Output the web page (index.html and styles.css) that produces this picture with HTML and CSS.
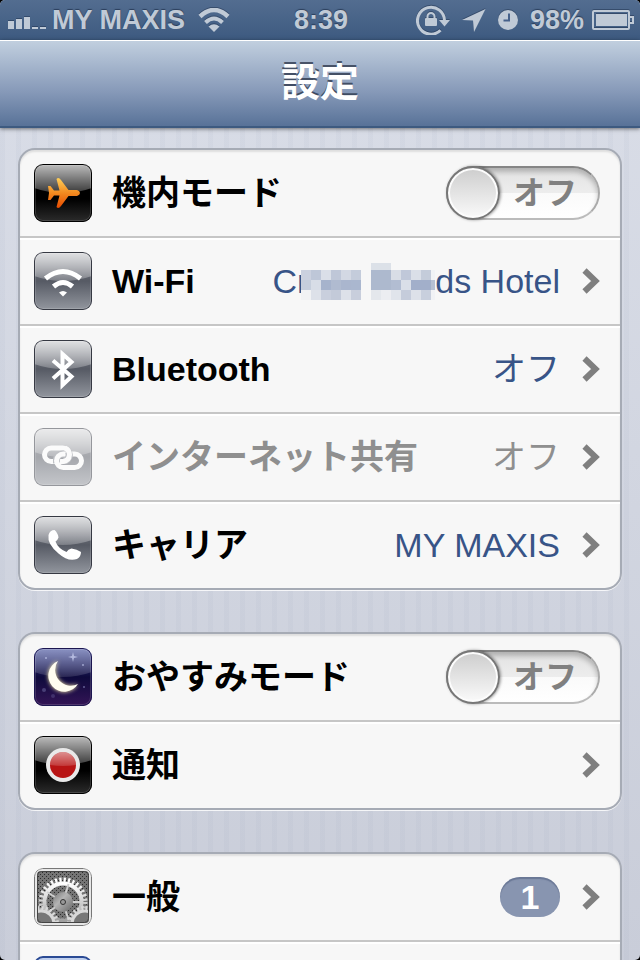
FILE: index.html
```html
<!DOCTYPE html>
<html lang="ja">
<head>
    <meta charset="UTF-8">
    <meta name="viewport" content="width=device-width, initial-scale=1.0">
    <title>設定</title>
    <link rel="stylesheet" href="styles.css">
</head>
<body>
    <!-- shared gradients and symbols -->
    <svg class="defs" width="0" height="0" aria-hidden="true">
        <defs>
            <linearGradient id="gloss-fill" x1="0" y1="0" x2="0" y2="1">
                <stop offset="0" stop-color="#fff" stop-opacity=".75"/>
                <stop offset="1" stop-color="#fff" stop-opacity=".22"/>
            </linearGradient>
            <linearGradient id="orange" x1="0" y1="0" x2="0" y2="1">
                <stop offset="0" stop-color="#ffd05a"/>
                <stop offset=".5" stop-color="#f28a20"/>
                <stop offset="1" stop-color="#e64a00"/>
            </linearGradient>
            <linearGradient id="metal" x1="0" y1="0" x2="0" y2="1">
                <stop offset="0" stop-color="#fff"/>
                <stop offset="1" stop-color="#a0a0a0"/>
            </linearGradient>
            <linearGradient id="hub" x1="0" y1="0" x2="1" y2="1">
                <stop offset="0" stop-color="#777"/>
                <stop offset=".4" stop-color="#b4b4b4"/>
                <stop offset="1" stop-color="#666"/>
            </linearGradient>
            <pattern id="mesh" width="4" height="4" patternUnits="userSpaceOnUse">
                <rect width="4" height="4" fill="#747474"/>
                <rect width="1" height="1" fill="#2c2c2c"/>
                <rect x="2" y="2" width="1" height="1" fill="#2c2c2c"/>
            </pattern>
        </defs>
        <symbol id="gloss" viewBox="0 0 58 58">
            <path d="M0 0H58V24Q29 34 0 24Z" fill="url(#gloss-fill)"/>
        </symbol>
        <symbol id="chevron" viewBox="0 0 18 26">
            <path d="M2.5 2.5L13.5 13L2.5 23.5" fill="none" stroke="#7f7f7f" stroke-width="6"/>
        </symbol>
    </svg>

    <div class="screen">
        <header class="status-bar">
            <div class="status-left">
                <svg class="signal" width="38" height="13" viewBox="0 0 38 13" fill="currentColor">
                    <rect y="5" width="6" height="8"/>
                    <rect x="8" y="3" width="6" height="10"/>
                    <rect x="16" y="1" width="6" height="12"/>
                    <rect x="24" y="11" width="6" height="2"/>
                    <rect x="32" y="11" width="6" height="2"/>
                </svg>
                <span>MY MAXIS</span>
                <svg class="status-wifi" width="32" height="24" viewBox="0 0 32 24">
                    <path d="M2 8.5Q16-4.5 30 8.5" fill="none" stroke="currentColor" stroke-width="4.5"/>
                    <path d="M7.5 14.5Q16 6.5 24.5 14.5" fill="none" stroke="currentColor" stroke-width="4"/>
                    <path d="M10.500 18.5Q16 14 21.500 18.5L16 24Z" fill="currentColor"/>
                </svg>
            </div>
            <time class="clock">8:39</time>
            <div class="status-right">
                <svg width="34" height="30" viewBox="0 0 34 30">
                    <path d="M24.5 25.300A13.500 13.500 0 1 1 28.500 16" fill="none" stroke="currentColor" stroke-width="3"/>
                    <path d="M23 15H34L28.500 21.500Z" fill="currentColor"/>
                    <rect x="9" y="13" width="12" height="8" rx="1" fill="currentColor"/>
                    <path d="M11.500 13V11.500a3.500 3.500 0 0 1 7 0V13" fill="none" stroke="currentColor" stroke-width="2"/>
                </svg>
                <svg width="24" height="24" viewBox="0 0 24 24">
                    <path d="M23.500 1L12 24L11 12.500L0 12Z" fill="currentColor"/>
                </svg>
                <svg width="20" height="20" viewBox="0 0 20 20">
                    <circle cx="10" cy="10" r="10" fill="currentColor"/>
                    <path d="M11 3.500V10.500H5.500" fill="none" stroke="#46618a" stroke-width="2"/>
                </svg>
                <span>98%</span>
                <svg width="42" height="20" viewBox="0 0 42 20">
                    <rect x="1" y="1" width="36" height="18" rx="1" fill="none" stroke="currentColor" stroke-width="2"/>
                    <rect x="4" y="4" width="31" height="12" fill="currentColor"/>
                    <path d="M38 7H41V13H38" fill="none" stroke="currentColor" stroke-width="2"/>
                </svg>
            </div>
        </header>

        <div class="nav-bar">
            <h1>設定</h1>
        </div>

        <main class="content">
            <ul class="card">
                <li class="row">
                    <span class="icon icon-black">
                        <svg viewBox="0 0 58 58">
                            <use href="#gloss"/>
                            <path d="M14 22H16.500L20 26.500H25.500L22.500 15Q24.500 12.500 27 16L34.500 26H43Q46 27 46 29Q46 31 43 32H34.500L27 42Q24.500 45.500 22.500 43L25.500 31.500H20L16.500 36H14L15 29Z" fill="url(#orange)"/>
                        </svg>
                    </span>
                    <label class="name" for="airplane">機内モード</label>
                    <span class="switch">
                        <input type="checkbox" id="airplane">
                        <span class="switch-text">オフ</span>
                    </span>
                </li>
                <li>
                    <a class="row" href="#">
                        <span class="icon icon-gray">
                            <svg viewBox="0 0 58 58">
                                <use href="#gloss"/>
                                <g fill="none" stroke="#fff" stroke-width="5">
                                    <path d="M11.500 26.500Q29 12.500 46.500 26.500"/>
                                    <path d="M19.500 34.500Q29 26.500 38.500 34.500"/>
                                </g>
                                <path d="M25 40.500Q29 37.500 33 40.500L29 44.500Z" fill="#fff"/>
                            </svg>
                        </span>
                        <span class="name">Wi-Fi</span>
                        <span class="value network">Cr<svg class="mosaic" width="134" height="37" viewBox="0 0 134 37" shape-rendering="crispEdges">
                                <rect width="60" height="37" fill="#f7f7f7"/>
                                <rect x="0" y="7" width="10" height="10" fill="#cbd1df"/>
                                <rect x="10" y="7" width="10" height="10" fill="#bec7d8"/>
                                <rect x="20" y="7" width="10" height="10" fill="#dadfe8"/>
                                <rect x="30" y="7" width="10" height="10" fill="#bfc7d8"/>
                                <rect x="40" y="7" width="10" height="10" fill="#d3d8e3"/>
                                <rect x="50" y="7" width="10" height="10" fill="#c4ccdb"/>
                                <rect x="0" y="17" width="10" height="10" fill="#c6cedc"/>
                                <rect x="10" y="17" width="10" height="10" fill="#d8dde7"/>
                                <rect x="20" y="17" width="10" height="10" fill="#a6b3cc"/>
                                <rect x="30" y="17" width="10" height="10" fill="#b0bbd0"/>
                                <rect x="40" y="17" width="10" height="10" fill="#aab6ce"/>
                                <rect x="50" y="17" width="10" height="10" fill="#aab7cf"/>
                                <rect x="0" y="27" width="10" height="10" fill="#f1f2f4"/>
                                <rect x="10" y="27" width="10" height="10" fill="#dde1e9"/>
                                <rect x="20" y="27" width="10" height="10" fill="#c9cfdd"/>
                                <rect x="30" y="27" width="10" height="10" fill="#c3cad9"/>
                                <rect x="40" y="27" width="10" height="10" fill="#dde1e9"/>
                                <rect x="50" y="27" width="10" height="10" fill="#c8cedc"/>
                                <rect x="70" y="0" width="20" height="7" fill="#dce1e8"/>
                                <rect x="70" y="7" width="20" height="20" fill="#adb9ce"/>
                                <rect x="90" y="7" width="10" height="10" fill="#d8dde6"/>
                                <rect x="100" y="7" width="10" height="10" fill="#c0c8d9"/>
                                <rect x="110" y="7" width="10" height="10" fill="#dadfe8"/>
                                <rect x="120" y="7" width="10" height="10" fill="#c4ccda"/>
                                <rect x="130" y="7" width="4" height="10" fill="#f1f3f5"/>
                                <rect x="90" y="17" width="10" height="10" fill="#b2bdd2"/>
                                <rect x="100" y="17" width="10" height="10" fill="#dadfe8"/>
                                <rect x="110" y="17" width="20" height="10" fill="#a2afca"/>
                                <rect x="130" y="17" width="4" height="10" fill="#b6c0d3"/>
                                <rect x="70" y="27" width="10" height="10" fill="#e4e7ec"/>
                                <rect x="80" y="27" width="10" height="10" fill="#ecedf1"/>
                                <rect x="90" y="27" width="10" height="10" fill="#e0e4eb"/>
                                <rect x="100" y="27" width="10" height="10" fill="#c5ccdb"/>
                                <rect x="110" y="27" width="10" height="10" fill="#dde1e9"/>
                                <rect x="120" y="27" width="10" height="10" fill="#c8cfdd"/>
                                <rect x="130" y="27" width="4" height="10" fill="#f1f2f5"/>
                            </svg>ds Hotel</span>
                        <svg class="chevron"><use href="#chevron"/></svg>
                    </a>
                </li>
                <li>
                    <a class="row" href="#">
                        <span class="icon icon-gray">
                            <svg viewBox="0 0 58 58">
                                <use href="#gloss"/>
                                <path d="M19 20.500L37.500 36.500L28.500 45V14L37.500 22L19 38.500" fill="none" stroke="#fff" stroke-width="4"/>
                            </svg>
                        </span>
                        <span class="name">Bluetooth</span>
                        <span class="value">オフ</span>
                        <svg class="chevron"><use href="#chevron"/></svg>
                    </a>
                </li>
                <li>
                    <a class="row disabled" href="#">
                        <span class="icon icon-gray">
                            <svg viewBox="0 0 58 58">
                                <use href="#gloss"/>
                                <g fill="none" stroke="#fff" stroke-width="5">
                                    <rect x="10.500" y="20" width="25" height="13.500" rx="6.750"/>
                                    <path d="M22.500 35Q21.500 26 29.500 26H34" stroke="#888c95" stroke-width="7"/>
                                    <rect x="22.500" y="26" width="25" height="13.500" rx="6.750"/>
                                    <path d="M34.500 23.500Q37 30 31 33" stroke="#888c95" stroke-width="7"/>
                                    <path d="M31 20Q35.500 22 35.500 26.750Q35 33 28.750 33.500H27"/>
                                </g>
                            </svg>
                        </span>
                        <span class="name">インターネット共有</span>
                        <span class="value">オフ</span>
                        <svg class="chevron"><use href="#chevron"/></svg>
                    </a>
                </li>
                <li>
                    <a class="row" href="#">
                        <span class="icon icon-gray">
                            <svg viewBox="0 0 58 58">
                                <use href="#gloss"/>
                                <path d="M14.500 19Q16 14 20.500 14Q24 17 24.500 21.500Q23.500 24.500 21.500 25.500Q24 32.500 32.500 36Q34 33 37.500 32.500Q43 33 47 36Q47 41 43 43Q34 46 24.500 37.500Q13 28 14.500 19Z" fill="#fff"/>
                            </svg>
                        </span>
                        <span class="name">キャリア</span>
                        <span class="value">MY MAXIS</span>
                        <svg class="chevron"><use href="#chevron"/></svg>
                    </a>
                </li>
            </ul>

            <ul class="card">
                <li class="row">
                    <span class="icon icon-night">
                        <svg viewBox="0 0 58 58">
                            <g fill="#a9b1e4">
                                <circle cx="12" cy="10" r="1" opacity=".7"/>
                                <circle cx="49" cy="17" r="1" opacity=".7"/>
                                <circle cx="50" cy="39" r="1" opacity=".5"/>
                                <circle cx="10" cy="42" r="2" opacity=".3"/>
                                <circle cx="19" cy="48" r="2" opacity=".2"/>
                                <path d="M39 4L40 8L44 9L40 10L39 14L38 10L34 9L38 8Z" opacity=".8"/>
                            </g>
                            <use href="#gloss" opacity=".55"/>
                            <path class="moon" d="M24 13A16 16 0 1 0 44 36A15.700 15.700 0 0 1 24 13Z" fill="#fffdf0"/>
                        </svg>
                    </span>
                    <label class="name" for="dnd">おやすみモード</label>
                    <span class="switch">
                        <input type="checkbox" id="dnd">
                        <span class="switch-text">オフ</span>
                    </span>
                </li>
                <li>
                    <a class="row" href="#">
                        <span class="icon icon-black">
                            <svg viewBox="0 0 58 58">
                                <use href="#gloss"/>
                                <circle cx="29" cy="29" r="17" fill="#e9e9e9"/>
                                <circle cx="29" cy="29" r="13" fill="#b81414"/>
                                <path d="M16 29a13 13 0 0 1 26 0Q29 31 16 29Z" fill="url(#gloss-fill)" opacity=".7"/>
                            </svg>
                        </span>
                        <span class="name">通知</span>
                        <svg class="chevron"><use href="#chevron"/></svg>
                    </a>
                </li>
            </ul>

            <ul class="card">
                <li>
                    <a class="row" href="#">
                        <span class="icon">
                            <svg viewBox="0 0 58 58">
                                <rect x=".5" y=".5" width="57" height="57" rx="8" fill="#e6e6e6" stroke="#777"/>
                                <clipPath id="gear-box"><rect x="3" y="3" width="52" height="52" rx="4"/></clipPath>
                                <g clip-path="url(#gear-box)">
                                    <rect width="58" height="58" fill="url(#mesh)"/>
                                    <g fill="none" stroke="url(#metal)">
                                        <circle cx="29" cy="34" r="18.500" stroke-width="4"/>
                                        <circle cx="29" cy="34" r="22" stroke-width="5" stroke-dasharray="2.200 2.120"/>
                                    </g>
                                    <g stroke="#d0d0d0" stroke-width="2">
                                        <path d="M29 34L34.500 16"/>
                                        <path d="M29 34L13 24"/>
                                        <path d="M29 34.100L48 34"/>
                                        <path d="M29 34L13 45"/>
                                        <path d="M29 34L34.500 52"/>
                                    </g>
                                    <circle cx="29" cy="34" r="10" fill="url(#hub)"/>
                                    <circle cx="29" cy="34" r="2.500" fill="#999" stroke="#333"/>
                                    <g fill="#777" stroke="#d8d8d8">
                                        <circle cx="7" cy="56" r="13" stroke-width="3"/>
                                        <circle cx="7" cy="56" r="16" fill="none" stroke-width="4" stroke-dasharray="2.100 2.089"/>
                                        <circle cx="51" cy="56" r="13" stroke-width="3"/>
                                        <circle cx="51" cy="56" r="16" fill="none" stroke-width="4" stroke-dasharray="2.100 2.089"/>
                                    </g>
                                </g>
                                <rect x="3.500" y="3.500" width="51" height="51" rx="4" fill="none" stroke="#444"/>
                            </svg>
                        </span>
                        <span class="name">一般</span>
                        <span class="badge">1</span>
                        <svg class="chevron"><use href="#chevron"/></svg>
                    </a>
                </li>
                <li>
                    <a class="row" href="#">
                        <span class="icon icon-blue"></span>
                    </a>
                </li>
            </ul>
        </main>
    </div>
</body>
</html>
```
FILE: styles.css
```css
*,
*::before,
*::after{
    margin: 0;
    padding: 0;
    box-sizing: border-box;
}

body{
    background: #000;
    font-family: "Liberation Sans", "Noto Sans CJK JP", sans-serif;
    font-size: 34px;
    color: #000;
}

li{
    list-style: none;
}

a{
    color: inherit;
    text-decoration: none;
}

svg{
    display: block;
    flex: none;
}

.defs{
    position: absolute;
}

.screen{
    height: 100vh;
    overflow: hidden;
    border-radius: 5px;
    background:
        repeating-linear-gradient(90deg, rgba(120, 135, 165, .05) 0 5px, transparent 5px 16px),
        linear-gradient(#dadee8, #c9cdd9);
}

/* status bar */
.status-bar{
    display: grid;
    grid-template-columns: 1fr auto 1fr;
    align-items: center;
    height: 40px;
    padding: 0 6px 0 8px;
    background: linear-gradient(#536d90, #3d5a80);
    color: #c0cad6;
    font-size: 27px;
    font-weight: bold;
    text-shadow: 0 -1px 1px rgba(20, 35, 60, .6);
}

.status-bar svg{
    filter: drop-shadow(0 -1px 0 rgba(20, 35, 60, .4));
}

.status-left,
.status-right{
    display: flex;
    align-items: center;
}

.status-left{
    gap: 6px;
}

.status-right{
    justify-content: flex-end;
    gap: 12px;
}

.status-right span{
    margin-right: -4px;
}

.signal{
    margin-top: 4px;
}

.status-wifi{
    margin-left: 7px;
}

/* navigation bar */
.nav-bar{
    position: relative;
    display: flex;
    justify-content: center;
    align-items: center;
    height: 88px;
    padding-bottom: 2px;
    border-top: 1px solid #fff;
    border-bottom: 2px solid #3d5a80;
    background: linear-gradient(#c1cfdf, #8699b8 60%, #587298);
    box-shadow: 0 1px 4px rgba(0, 0, 0, .5);
}

.nav-bar h1{
    color: #fff;
    font-size: 39px;
    line-height: 48px;
    text-shadow: 0 -2px 0 rgba(40, 50, 70, .75);
}

/* grouped lists */
.content{
    display: flex;
    flex-direction: column;
    gap: 42px;
    padding: 20px 18px;
}

.card{
    border: 2px solid #a6abb5;
    border-radius: 17px;
    background: #f7f7f7;
    box-shadow: 0 1px 0 rgba(255, 255, 255, .8), inset 0 2px 2px rgba(0, 0, 0, .1);
}

.card > li + li{
    border-top: 2px solid #c6c6c6;
    box-shadow: inset 0 2px 0 #fff;
}

.row{
    display: flex;
    align-items: center;
    height: 86px;
    padding: 0 20px 0 14px;
}

.name{
    flex: 1;
    margin-left: 20px;
    font-weight: bold;
    line-height: 48px;
    white-space: nowrap;
}

.value{
    color: #385487;
    line-height: 48px;
    white-space: nowrap;
}

.network{
    display: flex;
    align-items: center;
}

.mosaic{
    margin-left: -7px;
}

.chevron{
    width: 18px;
    height: 26px;
    margin-left: 22px;
}

.disabled .name,
.disabled .value{
    color: #8f8f8f;
}

.disabled .icon{
    opacity: .5;
}

.badge{
    width: 60px;
    border-radius: 20px;
    background: #8895b0;
    box-shadow: inset 0 2px 1px rgba(60, 75, 110, .4);
    color: #fff;
    font-weight: bold;
    line-height: 40px;
    text-align: center;
}

/* row icons */
.icon{
    position: relative;
    flex: none;
    width: 58px;
    height: 58px;
    overflow: hidden;
    border-radius: 9px;
}

.icon-black{
    background: linear-gradient(#000 60%, #2c2c2c);
}

.icon-gray{
    background: linear-gradient(#8a8d94, #565a64 50%, #93979f);
}

.icon-night{
    background: linear-gradient(#3d4a9c, #0e0a3c 50%, #341556);
}

.icon-blue{
    border: 2px solid #2a4a94;
    background: #c0d0ee;
}

.icon-black::after,
.icon-gray::after,
.icon-night::after{
    content: "";
    position: absolute;
    inset: 0;
    border: 1px solid #363943;
    border-radius: 9px;
    box-shadow: inset 0 0 0 1px rgba(255, 255, 255, .15);
}

.icon-black::after{
    border-color: #000;
}

.icon-night::after{
    border-color: #1c1650;
}

.moon{
    filter: drop-shadow(0 0 2px #fff3b0);
}

/* on/off switch */
.switch{
    position: relative;
    width: 154px;
    height: 54px;
}

.switch input{
    display: block;
    width: 100%;
    height: 100%;
    appearance: none;
    border: 2px solid;
    border-color: #858585 #aaa #bbb;
    border-radius: 27px;
    background: linear-gradient(#e2e2e2, #ededed 50%, #fafafa 50%, #fff);
    box-shadow: inset 0 4px 5px rgba(0, 0, 0, .22);
}

.switch input::before{
    content: "";
    position: absolute;
    top: 0;
    left: 0;
    width: 54px;
    height: 54px;
    border: 2px solid #777;
    border-radius: 50%;
    background: linear-gradient(#cdcdcd, #fafafa);
    box-shadow: inset 0 0 0 2px #fcfcfc, 1px 0 3px rgba(0, 0, 0, .4);
}

.switch-text{
    position: absolute;
    top: 0;
    left: 67px;
    color: #808080;
    font-size: 32px;
    font-weight: bold;
    line-height: 54px;
    pointer-events: none;
}
```
